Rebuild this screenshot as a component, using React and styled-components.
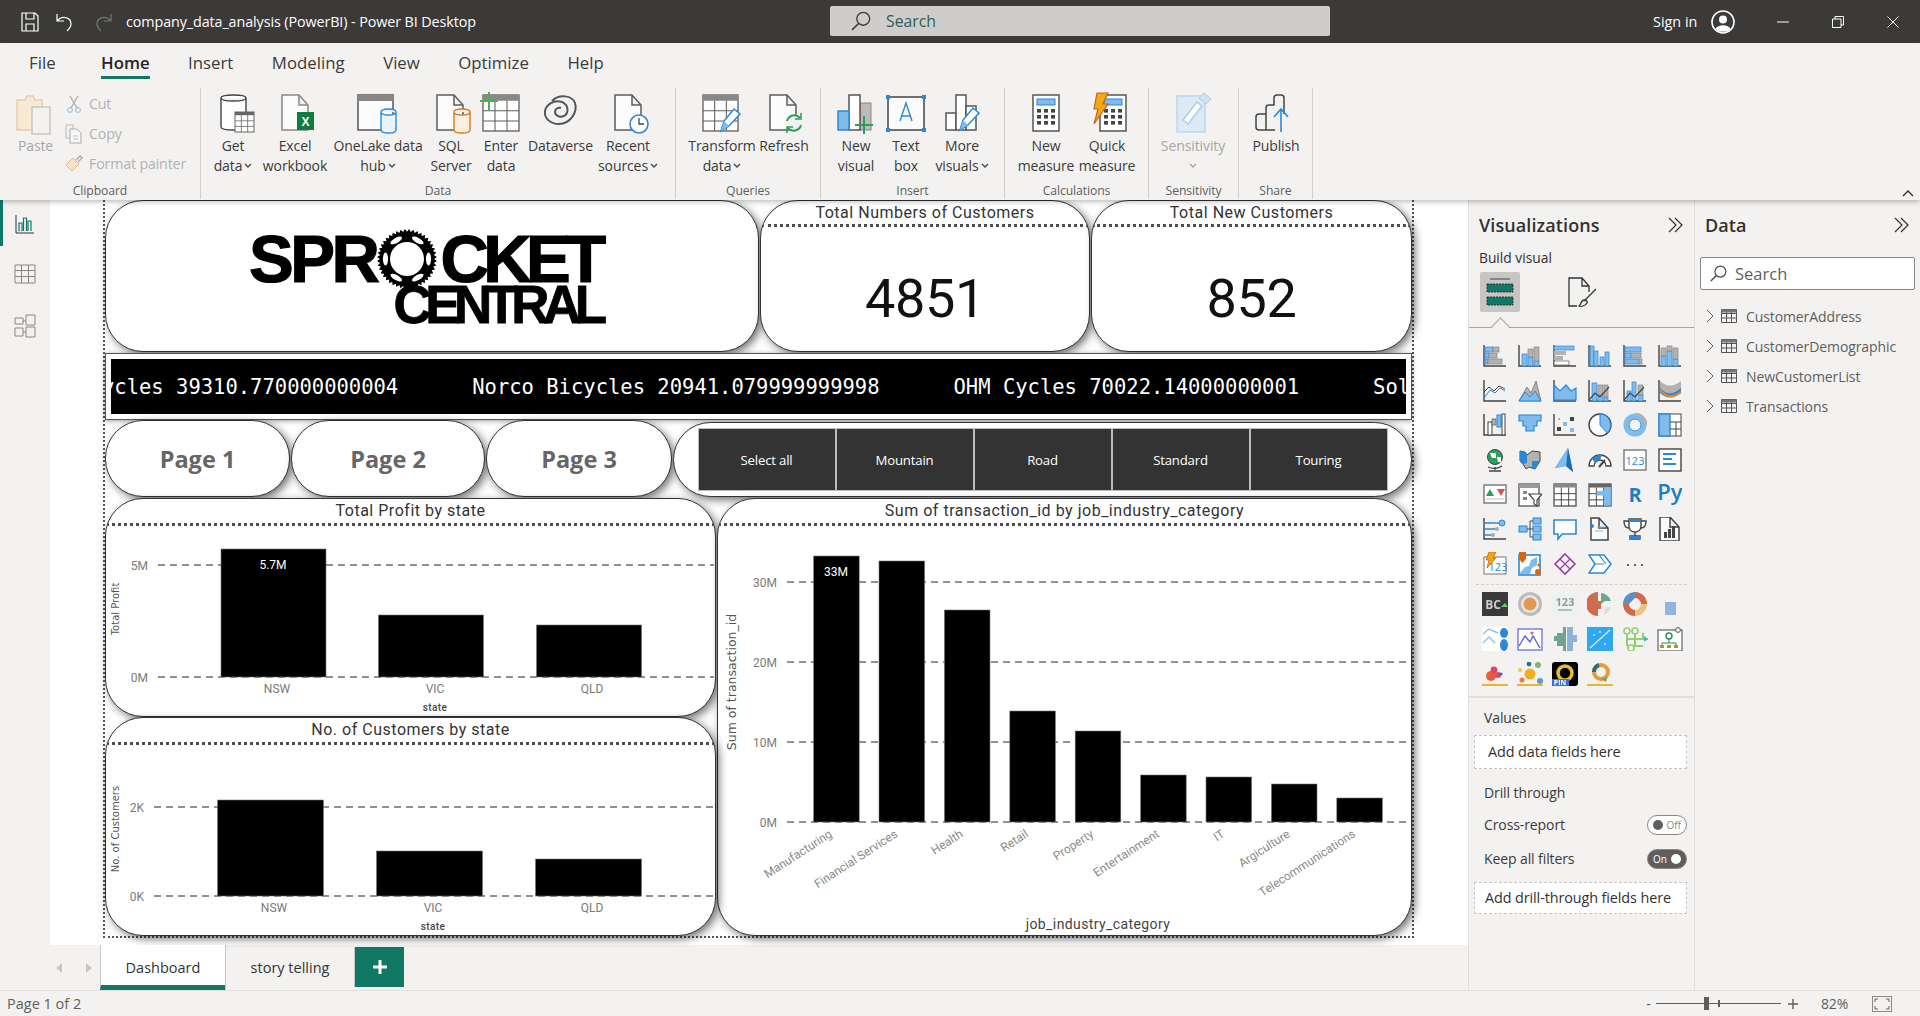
import React from 'react'
import styled, { createGlobalStyle } from 'styled-components'

const UI = '"Open Sans", "Noto Sans", sans-serif'
const DIN = 'Roboto, "Liberation Sans", sans-serif'
const GREEN = '#117865'
const DARK = '#444'
const BLUE = '#2b88d8'
const SKY = '#7fbbec'
const GRAY = '#b4b2b0'

const Global = createGlobalStyle`
  html, body { margin: 0; padding: 0; overflow: hidden; background: #f3f2f1; }
  #root { height: 1016px; }
  * { box-sizing: border-box; }
  svg { display: block; flex: none; }
`

const Shell = styled.div`
  width: 1920px;
  height: 1016px;
  display: grid;
  grid-template-rows: 43px 157px 790px 26px;
  font-family: ${UI};
  color: #252423;
`

/* title bar */
const TitleBar = styled.header`
  background: #3b3a39;
  color: #fff;
  display: flex;
  align-items: center;
  padding-left: 20px;
  position: relative;
`
const TitleIcons = styled.div`
  display: flex;
  gap: 16px;
  align-items: center;
  width: 106px;
`
const DocTitle = styled.div`
  font-size: 14.35px;
  width: 704px;
  letter-spacing: -0.1px;
  white-space: nowrap;
`
const TopSearch = styled.div`
  width: 500px;
  height: 30px;
  margin-top: -2px;
  background: #cfcdcb;
  border-radius: 2px;
  display: flex;
  align-items: center;
  gap: 15px;
  padding-left: 21px;
  color: #2f5d55;
  font-size: 15.8px;
`
const SignIn = styled.div`
  margin-left: 323px;
  font-size: 14.4px;
  width: 58px;
  white-space: nowrap;
`
const WindowButtons = styled.div`
  display: flex;
  align-items: center;
  margin-left: 20px;
`
const WindowButton = styled.div`
  width: 55px;
  display: flex;
  justify-content: center;
`

/* ribbon */
const Ribbon = styled.section`
  background: #f3f2f1;
  box-shadow: 0 2px 5px rgba(0, 0, 0, 0.25);
  position: relative;
  z-index: 2;
  display: flex;
  flex-direction: column;
`
const Menu = styled.nav`
  height: 38px;
  display: flex;
  align-items: center;
  padding-left: 29px;
  gap: 38.5px;
  font-size: 16.8px;
  color: #3b3a39;
`
const MenuItem = styled.div`
  position: relative;
  font-weight: ${(p) => (p.$active ? 600 : 400)};
  color: ${(p) => (p.$active ? '#252423' : '#3b3a39')};
  margin-left: ${(p) => (p.$active ? '7px' : '0')};
  ${(p) =>
    p.$active &&
    `&::after { content: ''; position: absolute; left: 0; right: 0; bottom: -5px; height: 3px; background: ${GREEN}; }`}
`
const Groups = styled.div`
  flex: 1;
  display: flex;
  padding-top: 7px;
  padding-bottom: 1px;
`
const Group = styled.div`
  width: ${(p) => p.$w}px;
  border-right: 1px solid #d2d0ce;
  display: flex;
  flex-direction: column;
  align-items: center;
`
const GroupItems = styled.div`
  flex: 1;
  width: 100%;
  display: flex;
  padding-top: 4px;
  padding-left: ${(p) => p.$pad || 0}px;
`
const GroupLabel = styled.div`
  font-size: 12.2px;
  line-height: 16px;
  color: #605e5c;
  letter-spacing: -0.1px;
`
const Item = styled.div`
  width: ${(p) => p.$w}px;
  display: flex;
  flex-direction: column;
  align-items: center;
  font-size: 14px;
  line-height: 20px;
  letter-spacing: -0.1px;
  text-align: center;
  color: ${(p) => (p.$off ? '#a8a6a4' : '#3b3a39')};
  white-space: nowrap;
`
const ItemIcon = styled.div`
  height: 44px;
`
const LabelLine = styled.div`
  display: flex;
  align-items: center;
  justify-content: center;
  gap: 2px;
  height: 20px;
`
const SmallColumn = styled.div`
  display: flex;
  flex-direction: column;
  gap: 7px;
  margin-left: 7px;
`
const SmallItem = styled.div`
  display: flex;
  align-items: center;
  gap: 6px;
  height: 23px;
  font-size: 14.3px;
  letter-spacing: -0.2px;
  color: #b3b1af;
  white-space: nowrap;
`
const Collapse = styled.div`
  position: absolute;
  right: 6px;
  bottom: 3px;
`

/* body */
const Body = styled.main`
  display: flex;
  min-height: 0;
`
const Rail = styled.aside`
  width: 50px;
  display: flex;
  flex-direction: column;
  align-items: center;
  gap: 30px;
  padding-top: 14px;
  position: relative;
  &::before {
    content: '';
    position: absolute;
    left: 0;
    top: 0;
    width: 3px;
    height: 46px;
    background: ${GREEN};
  }
`
const Center = styled.div`
  flex: 1;
  display: flex;
  flex-direction: column;
  min-width: 0;
`
const Canvas = styled.div`
  height: 745px;
  background: #fff;
  padding-left: 53px;
`
const Report = styled.div`
  width: 1311px;
  height: 738px;
  border: 2px dotted #555;
  border-top: 0;
  display: flex;
  flex-direction: column;
`
const Card = styled.div`
  background: #fff;
  border: 1px solid #333;
  border-radius: 38px;
  box-shadow: 3px 3px 8px rgba(0, 0, 0, 0.55);
`
const TopRow = styled.div`
  display: grid;
  grid-template-columns: 654px 330px 1fr;
  gap: 1px;
  height: 152px;
`
const LogoCard = styled(Card)`
  display: flex;
  justify-content: center;
  padding: 28px 18px 0 0;
`
const Logo = styled.div`
  display: flex;
  flex-direction: column;
  align-items: flex-end;
  width: 355px;
  color: #000;
  font-family: 'Liberation Sans', Arial, sans-serif;
  font-weight: 700;
`
const LogoTop = styled.div`
  display: flex;
  align-items: center;
  font-size: 67px;
  line-height: 60px;
  height: 60px;
  -webkit-text-stroke: 1.2px #000;
`
const LogoSpr = styled.span`
  letter-spacing: -3.4px;
`
const LogoCket = styled.span`
  letter-spacing: -5.6px;
  margin-left: 4px;
`
const LogoBottom = styled.div`
  font-size: 53px;
  line-height: 38px;
  letter-spacing: -6.6px;
  margin-top: -3px;
  margin-right: 0;
  -webkit-text-stroke: 0.8px #000;
`
const KpiCard = styled(Card)`
  display: flex;
  flex-direction: column;
  overflow: hidden;
`
const VisualTitle = styled.div`
  height: ${(p) => p.$h || 25}px;
  line-height: ${(p) => p.$h || 25}px;
  font-family: ${DIN};
  font-size: 16px;
  text-align: center;
  color: #333;
  letter-spacing: 0.52px;
  white-space: nowrap;
`
const DotRule = styled.div`
  border-top: 3px dotted #4d4d4d;
  height: 0;
  flex: none;
`
const KpiValue = styled.div`
  flex: 1;
  display: flex;
  align-items: center;
  justify-content: center;
  padding-top: 18px;
  font-family: ${DIN};
  font-size: 54px;
  letter-spacing: -0.3px;
  color: #111;
`
const Ticker = styled.div`
  height: 67px;
  margin-top: 1px;
  background: #fff;
  border: 1px solid #555;
  box-shadow: 0 1px 5px rgba(0, 0, 0, 0.4);
  padding: 5px;
`
const TickerBand = styled.div`
  height: 100%;
  background: #000;
  color: #fff;
  overflow: hidden;
  display: flex;
  align-items: center;
  gap: 74px;
  font-family: 'DejaVu Sans Mono', monospace;
  font-size: 20.5px;
  white-space: nowrap;
`
const TickerItem = styled.span`
  flex: none;
  &:first-child { margin-left: -9px; }
`
const NavRow = styled.div`
  height: 77px;
  display: grid;
  grid-template-columns: 185px 194px 186px 1fr;
  gap: 1px;
`
const PageButton = styled(Card)`
  display: flex;
  align-items: center;
  justify-content: center;
  font-weight: 700;
  font-size: 23.5px;
  color: #666;
`
const SlicerCard = styled(Card)`
  display: flex;
  align-items: center;
  padding-left: 24px;
  margin-top: 2px;
`
const SlicerButton = styled.div`
  width: 138px;
  height: 63px;
  background: #333;
  border-right: 1px solid #fff;
  outline: 1px solid #bbb;
  outline-offset: -1px;
  display: flex;
  align-items: center;
  justify-content: center;
  color: #fff;
  font-size: 13.2px;
  letter-spacing: -0.2px;
`
const BottomGrid = styled.div`
  flex: 1;
  display: grid;
  grid-template-columns: 611px 1fr;
  grid-template-rows: 219px 1fr;
  column-gap: 1px;
  margin-top: 1px;
  min-height: 0;
`
const ChartCard = styled(Card)`
  display: flex;
  flex-direction: column;
  overflow: hidden;
  min-height: 0;
  ${(p) => p.$tall && 'grid-column: 2; grid-row: 1 / span 2;'}
  & > svg { margin-top: 1px; }
`

/* tab strip */
const TabStrip = styled.div`
  flex: 1;
  display: flex;
  align-items: stretch;
  font-size: 14.5px;
`
const TabArrows = styled.div`
  display: flex;
  align-items: center;
  gap: 24px;
  width: 50px;
  padding-left: 6px;
`
const Tab = styled.div`
  width: ${(p) => p.$w}px;
  display: flex;
  align-items: center;
  justify-content: center;
  border-left: 1px solid #c8c6c4;
  color: #333;
  background: ${(p) => (p.$active ? '#fff' : 'transparent')};
  border-bottom: ${(p) => (p.$active ? `5px solid ${GREEN}` : '0')};
  padding-top: ${(p) => (p.$active ? '5px' : '0')};
`
const AddTab = styled.div`
  width: 49px;
  height: 40px;
  margin: 2px 0 0 1px;
  background: ${GREEN};
  color: #fff;
  display: flex;
  align-items: center;
  justify-content: center;
  box-shadow: -1px 0 0 #c8c6c4;
`

/* panes */
const Pane = styled.aside`
  width: ${(p) => p.$w}px;
  border-left: 1px solid #e1dfdd;
  padding-top: 11px;
  display: flex;
  flex-direction: column;
`
const PaneHead = styled.div`
  display: flex;
  align-items: center;
  justify-content: space-between;
  height: 28px;
  padding: 0 10px 0 ${(p) => p.$pad}px;
  font-size: 18px;
  font-weight: 600;
  letter-spacing: 0.1px;
  color: #323130;
`
const BuildLabel = styled.div`
  margin: 10px 0 0 10px;
  height: 18px;
  font-size: 13.8px;
  line-height: 18px;
  font-weight: 500;
  color: #323130;
`
const BuildTabs = styled.div`
  display: flex;
  height: 56px;
  margin-top: 5px;
  padding-left: 11px;
  border-bottom: 1px solid #a8a6a4;
  position: relative;
  &::after {
    content: '';
    position: absolute;
    left: 25px;
    bottom: -6px;
    width: 12px;
    height: 12px;
    transform: rotate(45deg);
    background: #f3f2f1;
    border-left: 1px solid #a8a6a4;
    border-top: 1px solid #a8a6a4;
  }
`
const BuildTab = styled.div`
  width: 40px;
  height: 40px;
  border-radius: 2px;
  background: ${(p) => (p.$active ? '#c8c6c4' : 'transparent')};
  display: flex;
  align-items: center;
  justify-content: center;
  margin-right: ${(p) => p.$gap || 0}px;
`
const VizGrid = styled.div`
  display: grid;
  grid-template-columns: repeat(6, 35px);
  grid-auto-rows: 34.6px;
  padding: ${(p) => p.$top}px 0 0 8px;
  justify-items: center;
  align-items: center;
`
const Divider = styled.div`
  margin: 3px 7px 2px;
  border-top: 1px dashed #d2d0ce;
`
const PaneRule = styled.div`
  margin-top: 5px;
  border-top: 2px solid #e1dfdd;
`
const FieldLabel = styled.div`
  margin: ${(p) => p.$top || 0}px 0 0 15px;
  font-size: 14px;
  letter-spacing: -0.1px;
  font-weight: ${(p) => (p.$bold ? 500 : 400)};
  color: #3b3a39;
  height: 18px;
  line-height: 18px;
`
const DropBox = styled.div`
  margin: ${(p) => p.$top}px 0 0 5px;
  width: 213px;
  height: ${(p) => p.$h}px;
  background: #fff;
  border: 1px dashed #c8c6c4;
  display: flex;
  align-items: center;
  padding-left: ${(p) => p.$pad}px;
  font-size: 14.4px;
  letter-spacing: -0.1px;
  color: #323130;
  white-space: nowrap;
`
const ToggleRow = styled.div`
  margin: ${(p) => p.$top}px 0 0 15px;
  width: 203px;
  height: 20px;
  display: flex;
  align-items: center;
  justify-content: space-between;
  font-size: 14px;
  letter-spacing: -0.1px;
  color: #3b3a39;
`
const Toggle = styled.div`
  width: 40px;
  height: 20px;
  border-radius: 10px;
  border: 1px solid #8a8886;
  background: ${(p) => (p.$on ? '#605e5c' : '#fff')};
  color: ${(p) => (p.$on ? '#fff' : '#8a8886')};
  display: flex;
  flex-direction: ${(p) => (p.$on ? 'row-reverse' : 'row')};
  align-items: center;
  justify-content: space-between;
  padding: 0 5px;
  font-size: 10px;
  letter-spacing: 0;
  &::before {
    content: '';
    width: 10px;
    height: 10px;
    border-radius: 50%;
    background: ${(p) => (p.$on ? '#fff' : '#605e5c')};
  }
`
const DataSearch = styled.div`
  margin: 18px 0 0 5px;
  width: 215px;
  height: 33px;
  background: #fff;
  border: 1px solid #8a8886;
  border-radius: 2px;
  display: flex;
  align-items: center;
  gap: 8px;
  padding-left: 9px;
  font-size: 16.5px;
  color: #605e5c;
`
const TableList = styled.div`
  margin-top: 11px;
  display: flex;
  flex-direction: column;
`
const TableRow = styled.div`
  height: 30px;
  display: flex;
  align-items: center;
  padding-left: 11px;
  gap: 7px;
  font-size: 14px;
  letter-spacing: -0.1px;
  color: #605e5c;
  & > span { margin-left: 2px; }
`

/* status bar */
const StatusBar = styled.footer`
  border-top: 1px solid #e1dfdd;
  display: flex;
  align-items: center;
  padding-left: 7px;
  font-size: 14.5px;
  color: #605e5c;
`
const ZoomBox = styled.div`
  margin-left: auto;
  display: flex;
  align-items: center;
  color: #605e5c;
`
const ZoomTrack = styled.div`
  width: 125px;
  height: 1px;
  background: #605e5c;
  margin: 0 7px 0 5px;
  position: relative;
`
const ZoomThumb = styled.div`
  position: absolute;
  left: ${(p) => p.$x}px;
  top: ${(p) => -p.$h / 2}px;
  width: ${(p) => p.$w}px;
  height: ${(p) => p.$h}px;
  background: #605e5c;
`
const ZoomPercent = styled.div`
  margin: 0 24px 0 23px;
  font-size: 14px;
  letter-spacing: -0.2px;
`
const FitButton = styled.div`
  margin-right: 28px;
`

/* svg helpers */
const S = ({ w = 24, h = 24, vb, children }) => (
  <svg width={w} height={h} viewBox={vb || `0 0 ${w} ${h}`} fill="none">
    {children}
  </svg>
)
const Doc = ({ x = 10, y = 4, w = 24, h = 36, c = '#555', f = '#fbfbfb' }) => (
  <path d={`M${x} ${y}h${w - 9}l9 10v${h - 10}h-${w}zM${x + w - 9} ${y}v10h9`} stroke={c} strokeWidth="1.5" fill={f} />
)
const TableGrid = ({ x, y, w, h, rows = 3, cols = 3, head = '#8a8886', c = '#605e5c', f = '#fff', sw = 1 }) => {
  const top = h * 0.16
  const lines = []
  for (let i = 1; i < cols; i++) lines.push(`M${x + (w / cols) * i} ${y + top}V${y + h}`)
  for (let i = 1; i < rows; i++) lines.push(`M${x} ${y + top + ((h - top) / rows) * i}H${x + w}`)
  return (
    <g>
      <rect x={x} y={y} width={w} height={h} fill={f} stroke={c} strokeWidth={sw} />
      <rect x={x} y={y} width={w} height={top} fill={head} />
      <path d={lines.join('')} stroke={c} strokeWidth={sw * 0.8} />
    </g>
  )
}
const Cyl = ({ x, y, w, h, c, f = '#fff' }) => (
  <path
    d={`M${x} ${y + 3}c0-4 ${w}-4 ${w} 0v${h - 6}c0 4-${w} 4-${w} 0zM${x} ${y + 3}c0 4 ${w} 4 ${w} 0`}
    stroke={c}
    strokeWidth="1.4"
    fill={f}
  />
)
const Pen = ({ x = 0, y = 0 }) => (
  <g transform={`translate(${x} ${y})`}>
    <path d="M1 22l3-10 10-12 6 5-11 12z" fill="#fff" stroke={BLUE} strokeWidth="1.5" />
    <path d="M1 22l3-10 5 5z" fill={SKY} />
  </g>
)
const Calc = ({ x, y }) => (
  <g>
    <rect x={x} y={y} width="26" height="36" fill="#fff" stroke="#555" strokeWidth="1.5" />
    <rect x={x + 4} y={y + 4} width="18" height="6" fill={SKY} stroke={BLUE} />
    {[14, 20, 26].map((r) =>
      [4, 11, 18].map((c) => <rect key={`${r}${c}`} x={x + c} y={y + r} width="4" height="3.6" fill="#444" />),
    )}
  </g>
)
const Chevron = ({ c = '#444' }) => (
  <svg width="8" height="6" viewBox="0 0 8 6" fill="none">
    <path d="M1 1l3 3 3-3" stroke={c} strokeWidth="1.3" />
  </svg>
)
const Gear = () => {
  const pts = []
  const teeth = 44
  for (let i = 0; i < teeth * 2; i++) {
    const r = i % 2 ? 30 : 27.2
    const a = (i / (teeth * 2)) * Math.PI * 2
    pts.push(`${(30 + r * Math.cos(a)).toFixed(1)},${(30 + r * Math.sin(a)).toFixed(1)}`)
  }
  return (
    <svg width="60" height="60" viewBox="0 0 60 60">
      <polygon points={pts.join(' ')} fill="#000" />
      {[0, 60, 120, 180, 240, 300].map((d) => (
        <ellipse key={d} cx="30" cy="8.500" rx="6.500" ry="2.600" fill="#fff" transform={`rotate(${d + 30} 30 30)`} />
      ))}
      <circle cx="30" cy="30" r="17" fill="#fff" />
    </svg>
  )
}

/* ribbon icons, drawn on a 44 box */
const RI = {
  paste: (
    <S w={44} h={44}>
      <path d="M3 8h8l2-4h6l2 4h7v30H3z" fill="#f7e9d4" stroke="#e8cfa8" strokeWidth="1.5" />
      <rect x="18" y="15" width="18" height="27" fill="#f3f2f1" stroke="#c8c6c4" strokeWidth="1.5" />
    </S>
  ),
  data: (
    <S w={44} h={44}>
      <Cyl x={10} y={3} w={25} h={35} c="#444" />
      <TableGrid x={24} y={20} w={19} h={20} head="#666" c="#666" />
    </S>
  ),
  excel: (
    <S w={44} h={44}>
      <Doc x={9} y={3} w={26} h={35} c="#8a8886" />
      <rect x="24" y="20" width="17" height="18" fill="#107c41" />
      <text x="32.5" y="34" textAnchor="middle" fontSize="12" fontWeight="700" fill="#fff" fontFamily="Liberation Sans">X</text>
    </S>
  ),
  lake: (
    <S w={44} h={44}>
      <rect x="2" y="3" width="35" height="35" fill="#fbfbfb" stroke="#555" strokeWidth="1.5" />
      <rect x="2" y="3" width="35" height="6" fill="#8a8886" />
      <Cyl x={25} y={17} w={15} h={24} c={BLUE} f="#eaf4fc" />
    </S>
  ),
  sql: (
    <S w={44} h={44}>
      <Doc x={8} y={3} w={26} h={35} c="#605e5c" />
      <Cyl x={25} y={17} w={16} h={24} c="#d87a1d" f="#fdf0e2" />
    </S>
  ),
  enter: (
    <S w={44} h={44}>
      <TableGrid x={4} y={3} w={36} h={36} head="#8a8886" c="#605e5c" sw={1.3} />
      <path d="M10 0v18M1 9h18" stroke="#4caf50" strokeWidth="2" />
    </S>
  ),
  dataverse: (
    <S w={44} h={44}>
      <path d="M13 9c7-7 20-6 23 2 3 9-5 21-16 21-9 0-15-6-14-13 1-6 9-12 17-9 7 3 7 11 2 14-5 2-9-1-9-4 0-3 3-5 6-4" stroke="#555" strokeWidth="2" />
    </S>
  ),
  recent: (
    <S w={44} h={44}>
      <Doc x={9} y={3} w={26} h={35} c="#605e5c" />
      <circle cx="33" cy="32" r="9" fill="#fff" stroke={BLUE} strokeWidth="1.6" />
      <path d="M33 26v6h5" stroke="#444" strokeWidth="1.3" />
    </S>
  ),
  transform: (
    <S w={44} h={44}>
      <TableGrid x={3} y={3} w={35} h={36} c="#605e5c" sw={1.3} />
      <Pen x={20} y={17} />
    </S>
  ),
  refresh: (
    <S w={44} h={44}>
      <Doc x={8} y={3} w={26} h={35} c="#605e5c" />
      <circle cx="32" cy="31" r="8" fill="#f3f2f1" />
      <path d="M25 29a7.5 7.5 0 0 1 13-3M39 33a7.5 7.5 0 0 1-13 3" stroke="#2e9e5b" strokeWidth="2" />
      <path d="M39 21v6h-6M25 41v-6h6" stroke="#2e9e5b" strokeWidth="1.6" />
    </S>
  ),
  newVisual: (
    <S w={44} h={44}>
      <rect x="26" y="11" width="11" height="27" fill="#bdbbb9" stroke="#8a8886" />
      <rect x="15" y="3" width="11" height="35" fill="#fff" stroke="#555" strokeWidth="1.5" />
      <rect x="4" y="19" width="11" height="19" fill={SKY} stroke={BLUE} strokeWidth="1.5" />
      <path d="M30 24v18M21 33h18" stroke="#2e9e5b" strokeWidth="2" />
    </S>
  ),
  textBox: (
    <S w={44} h={44}>
      <rect x="4" y="5" width="36" height="33" fill="#fbfbfb" stroke="#444" strokeWidth="1.5" />
      <path d="M16 29l6-18 6 18M18 24h8" stroke={BLUE} strokeWidth="1.4" />
      {[[2, 3], [38, 3], [2, 36], [38, 36]].map(([x, y]) => <rect key={`${x}${y}`} x={x} y={y} width="4" height="4" fill={BLUE} />)}
    </S>
  ),
  moreVisuals: (
    <S w={44} h={44}>
      <rect x="6" y="21" width="10" height="17" fill="#fff" stroke="#555" strokeWidth="1.5" />
      <rect x="16" y="3" width="10" height="35" fill="#fff" stroke="#555" strokeWidth="1.5" />
      <rect x="26" y="14" width="10" height="24" fill="#fff" stroke="#555" strokeWidth="1.5" />
      <Pen x={19} y={16} />
    </S>
  ),
  measure: (
    <S w={44} h={44}>
      <Calc x={9} y={3} />
    </S>
  ),
  quick: (
    <S w={44} h={44}>
      <Calc x={15} y={3} />
      <path d="M12 1h11l-5 11h5L9 32l4-15H9z" fill="#f3a712" stroke="#c8641e" strokeWidth="1.2" />
    </S>
  ),
  sensitivity: (
    <S w={44} h={44}>
      <path d="M6 4h28v36H6z" fill="#dceaf5" stroke="#b9d7ee" strokeWidth="1.5" />
      <path d="M12 28l14-18 5 4-14 18z" fill="#fff" stroke="#a9cde9" strokeWidth="1.5" />
      <path d="M28 6l5-5 7 6-5 5z" fill="#cfe3f3" stroke="#a9cde9" />
    </S>
  ),
  publish: (
    <S w={44} h={44}>
      <path d="M5 38c-2 0-3-1-3-3V25c0-2 1-3 3-3h7v16zM12 22V16c0-2 1-3 3-3h5V6c0-2 1-3 3-3h4c2 0 3 1 3 3v16M12 38h9" stroke="#444" strokeWidth="1.5" strokeLinejoin="round" />
      <path d="M27 40V18M20 25l7-8 7 8" stroke={BLUE} strokeWidth="1.6" />
    </S>
  ),
}

/* visualization gallery */
const Ax = () => <path d="M1 1v21h22" stroke={DARK} strokeWidth="1.4" />
const Hb = ({ y, a, b, h = 5 }) => (
  <g>
    <rect x="2" y={y} width={a} height={h} fill={SKY} stroke={BLUE} strokeWidth=".7" />
    {b ? <rect x={2 + a} y={y} width={b} height={h} fill={GRAY} stroke="#8a8886" strokeWidth=".7" /> : null}
  </g>
)
const Vb = ({ x, a, b, w = 5 }) => (
  <g>
    <rect x={x} y={22 - a} width={w} height={a} fill={SKY} stroke={BLUE} strokeWidth=".7" />
    {b ? <rect x={x} y={22 - a - b} width={w} height={b} fill={GRAY} stroke="#8a8886" strokeWidth=".7" /> : null}
  </g>
)
const ComboLine = () => <path d="M1 21l6-7 5 4 9-10" stroke={DARK} strokeWidth="1.2" />
const T = ({ x = 12, y = 17, s = 12, c = SKY, w = 400, children }) => (
  <text x={x} y={y} fontSize={s} fontWeight={w} textAnchor="middle" fill={c} fontFamily="Open Sans">
    {children}
  </text>
)
const builtIn = [
  <><Ax /><Hb y={3} a={8} b={6} /><Hb y={9} a={4} b={8} /><Hb y={15} a={3} b={14} /></>,
  <><Ax /><Vb x={4} a={12} /><Vb x={10} a={9} b={8} /><Vb x={16} a={5} b={14} /></>,
  <><Ax /><rect x="1" y="2" width="20" height="4" fill={SKY} stroke={BLUE} strokeWidth=".7" /><rect x="1" y="7" width="12" height="4" fill={GRAY} /><rect x="1" y="12" width="9" height="4" fill={GRAY} /><rect x="1" y="17" width="15" height="4" fill="#fff" stroke={DARK} strokeWidth=".6" /></>,
  <><Ax /><Vb x={2} a={20} w={4} /><Vb x={6} a={15} w={4} /><Vb x={12} a={9} w={4} /><Vb x={17} a={14} w={4} /></>,
  <><Ax /><Hb y={3} a={16} /><Hb y={9} a={6} b={10} /><Hb y={15} a={14} b={3} /></>,
  <><Ax /><Vb x={3} a={10} b={8} /><Vb x={9} a={15} b={5} /><Vb x={15} a={7} b={11} /></>,
  <><Ax /><path d="M1 13l5-5 5 4 5-5 6 3" stroke={DARK} /><path d="M1 19l6-8 5 3 5-5 5 3" stroke={BLUE} /></>,
  <><path d="M1 22l8-14 4 6 5-12 5 20z" fill={GRAY} stroke="#8a8886" /><path d="M1 22l6-9 5 5 5-6 6 10z" fill={SKY} stroke={BLUE} /></>,
  <><Ax /><path d="M1 6l6 6 6-6 5 6 5-3v12H1z" fill={SKY} stroke={BLUE} strokeWidth="1.2" /></>,
  <><Ax /><Vb x={4} a={18} w={5} /><Vb x={10} a={6} b={10} w={5} /><Vb x={16} a={4} b={12} w={4} /><ComboLine /></>,
  <><Ax /><Vb x={4} a={10} w={4} /><Vb x={9} a={19} w={4} /><Vb x={15} a={6} b={10} w={5} /><ComboLine /></>,
  <><Ax /><path d="M2 2c7 6 13 6 21 0v9c-8 6-14 6-21 0z" fill={GRAY} /><path d="M2 9c7 7 13 7 21 0v5c-8 6-14 6-21 0z" fill={BLUE} /><path d="M2 11c7 8 13 8 21 2" stroke="#e8891c" strokeWidth="2" /></>,
  <><Ax /><rect x="5" y="9" width="4" height="13" fill="#fff" stroke={DARK} /><rect x="9" y="6" width="4" height="6" fill={GRAY} stroke={DARK} strokeWidth=".6" /><rect x="14" y="2" width="4" height="12" fill={SKY} stroke={BLUE} /><rect x="19" y="1" width="3" height="21" fill="#fff" stroke={DARK} /></>,
  <><path d="M1 2h22v6h-4v5h-3v5H8v-5H5V8H1z" fill={SKY} stroke={BLUE} strokeWidth="1.2" /></>,
  <><Ax /><rect x="4" y="14" width="4" height="4" fill={DARK} /><rect x="17" y="4" width="4" height="4" fill={DARK} /><rect x="10" y="9" width="4" height="4" fill={SKY} /><rect x="17" y="15" width="4" height="4" fill={SKY} /><rect x="5" y="5" width="2" height="2" fill={SKY} /></>,
  <><circle cx="12" cy="12" r="11" fill="#fff" stroke={DARK} strokeWidth="1.4" /><path d="M12 1a11 11 0 0 1 7 19l-7-8z" fill={SKY} stroke={BLUE} /></>,
  <><circle cx="12" cy="12" r="9" stroke={SKY} strokeWidth="5" /><path d="M12 1a11 11 0 0 1 11 11" stroke={GRAY} strokeWidth="3" /><circle cx="12" cy="12" r="6" stroke={BLUE} /></>,
  <><rect x="1" y="1" width="22" height="22" fill="#fff" stroke={DARK} /><rect x="1" y="1" width="11" height="22" fill={SKY} stroke={BLUE} strokeWidth="1.4" /><path d="M12 9h11M12 16h11M18 9v14" stroke={DARK} /></>,
  <><circle cx="12" cy="9" r="7.5" fill="#2e9e5b" stroke={DARK} /><path d="M7 5h6v5H9zM14 9h4v5h-3z" fill="#fff" /><path d="M5 19c4 2 10 2 14-1M12 19v3M6 23h12" stroke={DARK} strokeWidth="1.3" /></>,
  <><path d="M2 3l5 1 2 3 5-4 8 1v9l-5 8-6-2-3 2-3-5-3-3z" fill={GRAY} stroke={DARK} /><path d="M2 3l5 1 2 3v8l-3 1-4-3z" fill={BLUE} /><path d="M14 13h8l-5 8-3-1z" fill={BLUE} /></>,
  <><path d="M15 0l5 24-7-6-11 2z" fill={BLUE} /><path d="M15 0l-2 18 7 6z" fill="#1a6fb5" /><path d="M15 0L2 20l11-2z" fill={SKY} /></>,
  <><path d="M1 18a11 11 0 0 1 22 0h-5a6 6 0 0 0-12 0z" fill="#fff" stroke={DARK} strokeWidth="1.3" /><path d="M4 11a11 11 0 0 1 10-4l-2 5a6 6 0 0 0-5 3z" fill={BLUE} /><path d="M11 19l6-7" stroke={DARK} strokeWidth="2" /></>,
  <><rect x="1" y="2" width="22" height="20" fill="#fff" stroke="#777" strokeWidth="1.4" /><T y={16.5} s={11} c={BLUE}>123</T></>,
  <><rect x="1" y="1" width="22" height="22" fill="#fff" stroke={DARK} strokeWidth="1.4" /><path d="M5 6h13M5 11h9M5 16h13" stroke={BLUE} strokeWidth="2" /></>,
  <><rect x="1" y="2" width="22" height="18" fill="#fff" stroke="#777" strokeWidth="1.4" /><path d="M7 6l-4 7h8z" fill="#2e9e5b" /><path d="M14 6h8l-4 7z" fill="#e0504a" /><path d="M3 16h18" stroke="#bbb" /></>,
  <><rect x="1" y="1" width="20" height="22" fill="#fff" stroke={DARK} strokeWidth="1.2" /><rect x="1" y="1" width="20" height="4" fill="#999" /><rect x="5" y="8" width="4" height="3" fill="#888" /><rect x="5" y="14" width="4" height="3" fill="#888" /><path d="M11 11h13l-5 6v6l-3-2v-4z" fill="#fff" stroke={DARK} strokeWidth="1.2" /></>,
  <><TableGrid x={1} y={1} w={22} h={22} head="#8a8886" c={DARK} sw={1.2} /></>,
  <><TableGrid x={1} y={1} w={22} h={22} head="#666" c={DARK} sw={1.2} /><rect x="8.5" y="8" width="14" height="4.5" fill={SKY} /><rect x="15.8" y="4.5" width="7" height="18" fill={SKY} /></>,
  <T y={19} s={20} c="#1d7cc4" w={700}>R</T>,
  <T y={17} s={22} c="#1d7cc4" w={600}>Py</T>,
  <><Ax /><path d="M1 6h17M1 12h12M1 18h8" stroke={BLUE} strokeWidth="1.3" /><circle cx="19" cy="6" r="3" fill={SKY} stroke={BLUE} /><circle cx="14" cy="12" r="2" fill="#aaa" /><circle cx="10" cy="18" r="2" fill="#aaa" /></>,
  <><rect x="1" y="9" width="8" height="6" fill={SKY} stroke={BLUE} /><rect x="15" y="1" width="8" height="6" fill={SKY} stroke={BLUE} /><rect x="15" y="9" width="8" height="6" fill={SKY} stroke={BLUE} /><rect x="15" y="17" width="8" height="6" fill={SKY} stroke={BLUE} /><path d="M9 12h6M12 4v16M12 4h3M12 20h3" stroke={DARK} /></>,
  <><path d="M1 3h22v14H9l-4 5v-5H1z" fill="#fff" stroke={BLUE} strokeWidth="1.6" /></>,
  <><Doc x={3} y={1} w={17} h={22} c={DARK} /><circle cx="4" cy="9" r="2" fill={BLUE} /><path d="M9 10h8M7 14h8" stroke={SKY} /></>,
  <><path d="M6 2h12v7c0 8-12 8-12 0zM6 4H1c0 5 2 7 5 7M18 4h5c0 5-2 7-5 7M12 15v4M7 22h10v-3H7z" stroke={DARK} strokeWidth="1.4" fill="#fff" /><rect x="6" y="2" width="12" height="3" fill={BLUE} /><rect x="7" y="19" width="10" height="3" fill={BLUE} /></>,
  <><Doc x={2} y={0} w={19} h={24} c={DARK} /><rect x="6" y="15" width="3" height="6" fill={DARK} /><rect x="10" y="12" width="3" height="9" fill={DARK} /><rect x="14" y="9" width="3" height="12" fill={DARK} /></>,
  <><rect x="1" y="5" width="22" height="17" fill="#fff" stroke="#777" /><T x={15} y={19} s={11} c={BLUE}>123</T><path d="M6 0h7l-3 6h3L4 16l2-8H3z" fill="#f3a712" stroke="#c8641e" strokeWidth=".8" /></>,
  <><rect x="1" y="3" width="21" height="20" fill="#fff" stroke={BLUE} strokeWidth="1.6" /><path d="M1 22l6-7 4-1 2-6 6-3v8l-5 3-2 6z" fill={SKY} /><path d="M1 0h7v7l-3.5 4L1 7z" fill="#d8650f" /><circle cx="20" cy="20" r="3" fill="#d8650f" /><circle cx="21" cy="13" r="1.6" fill="#d8650f" /></>,
  <><path d="M12 2l10 10-10 10L2 12z" stroke="#9a3ea8" strokeWidth="1.6" /><path d="M7 7l10 10M17 7L7 17" stroke="#9a3ea8" strokeWidth="1.2" /></>,
  <><path d="M1 3h15l7 9-7 9H1l6-9z" fill="#fff" stroke={BLUE} strokeWidth="1.5" /><path d="M7 12h9M11 3l7 9" stroke={BLUE} strokeWidth="1.2" /></>,
  <><circle cx="5" cy="13" r="1.1" fill={DARK} /><circle cx="12" cy="13" r="1.1" fill={DARK} /><circle cx="19" cy="13" r="1.1" fill={DARK} /></>,
]
const Blur = styled.g`
  filter: blur(0.5px);
`
const custom = [
  <><rect width="26" height="24" fill="#3a3a3a" /><T x={11} y={17} s={12} c="#ccc" w={700}>BC</T><path d="M19 15l4-4 3 4z" fill="#5fd35f" /></>,
  <><circle cx="13" cy="12" r="12" fill="#bbb" /><circle cx="13" cy="12" r="9" fill="#e8e6e4" /><circle cx="13" cy="12" r="6.5" fill="#e09a58" /></>,
  <><rect width="26" height="22" y="1" fill="#e9f4f1" /><T x={13} y={14} s={11} c="#999" w={700}>123</T><path d="M6 18h14" stroke="#bbb" strokeWidth="2" /></>,
  <><path d="M11 0a12 12 0 0 0 0 24v-7h3v-8h-3z" fill="#cf6b4e" /><path d="M14 1a12 12 0 0 1 10 8h-6l-4 3z" fill="#6aa98e" /><path d="M19 15h5a12 12 0 0 1-8 8z" fill="#ddd" /></>,
  <><path d="M13 0a12 12 0 0 1 12 12h-6a6 6 0 0 0-6-6z" fill="#d1684b" /><path d="M25 12a12 12 0 0 1-12 12v-6a6 6 0 0 0 6-6z" fill="#edc083" /><path d="M13 24A12 12 0 0 1 1 12h6a6 6 0 0 0 6 6z" fill="#d1684b" /><path d="M1 12A12 12 0 0 1 13 0v6l-6 6z" fill="#5c8fc3" /></>,
  <><rect x="8" y="4" width="11" height="6" fill="#f2f2f2" /><rect x="8" y="10" width="11" height="13" fill="#93b5dc" /></>,
  <><rect width="26" height="24" fill="#fff" /><path d="M1 16l6-6 6 6M1 7l6-5 9 4" stroke="#8dc0ee" strokeWidth="1.4" /><ellipse cx="22" cy="6" rx="4" ry="5" fill="#2b88d8" /><ellipse cx="22" cy="18" rx="4" ry="6" fill="#2b88d8" /></>,
  <><rect x="1" y="2" width="24" height="21" fill="#fff" stroke="#5c63d8" strokeWidth="1.2" /><path d="M2 19l6-10 5 6 3-6 7 12" stroke="#5c63d8" strokeWidth="1.4" /><circle cx="15" cy="6" r="1.6" fill="#e64fc6" /></>,
  <><path d="M5 6h6V0h3v24h-3v-5H5v-5H2V9h3z" fill="#6fa395" /><path d="M15 0h6v8h4v7h-4v9h-6z" fill="#8fb3d6" /></>,
  <><rect width="26" height="24" fill="#2fa8f0" /><path d="M3 21L23 3" stroke="#cdeaff" strokeWidth="1.5" /><circle cx="7" cy="8" r="1" fill="#cdeaff" /><circle cx="18" cy="17" r="1" fill="#cdeaff" /><circle cx="13" cy="5" r="1" fill="#cdeaff" /></>,
  <><path d="M5 5v14M13 6v12M21 6v6M5 12h21M5 19h16" stroke="#8fd070" strokeWidth="2" /><circle cx="5" cy="4" r="3" fill="#fff" stroke="#8fd070" strokeWidth="1.6" /><circle cx="13" cy="4" r="3" fill="#fff" stroke="#8fd070" strokeWidth="1.6" /><circle cx="9" cy="21" r="3" fill="#fff" stroke="#8fd070" strokeWidth="1.6" /><path d="M22 9l4 3-4 3z" fill="#3ac0a5" /></>,
  <><rect x="1" y="3" width="24" height="21" fill="#fff" stroke="#777" strokeWidth="1.4" /><circle cx="12" cy="9" r="3" stroke="#2e8b57" strokeWidth="1.4" /><path d="M12 12v4M5 19v-3h14v3" stroke="#2e8b57" /><rect x="3" y="18" width="4" height="3" fill="#b4902e" /><rect x="10" y="18" width="4" height="3" fill="#b4902e" /><rect x="17" y="18" width="4" height="3" fill="#b4902e" /><circle cx="21" cy="3" r="2.4" fill="#f3f2f1" stroke="#555" /></>,
  <><circle cx="9" cy="14" r="5" fill="#ea5b3a" /><circle cx="12" cy="8" r="3.4" fill="#d9486a" /><circle cx="16" cy="13" r="3" fill="#d9486a" /><circle cx="19" cy="12" r="1.6" fill="#4060b0" /><path d="M0 23h26" stroke="#e8b53a" strokeWidth="2" /></>,
  <><circle cx="13" cy="12" r="5.5" fill="#f2b021" /><circle cx="3" cy="8" r="2" fill="#f2c94c" /><circle cx="12" cy="2" r="2.4" fill="#2f6f8f" /><circle cx="21" cy="3" r="3" fill="#79b67c" /><circle cx="23" cy="19" r="3" fill="#5a9bd5" /><circle cx="5" cy="18" r="2.5" fill="#e87d3e" /><path d="M0 23h26" stroke="#e8b53a" strokeWidth="2" /></>,
  <><rect width="26" height="24" rx="3" fill="#000" /><circle cx="13" cy="11" r="7" stroke="#e8c021" strokeWidth="3.5" /><rect y="17" width="17" height="7" fill="#3a6fd8" /><T x={8} y={23.4} s={7} c="#fff" w={700}>PIN</T></>,
  <><circle cx="14" cy="10" r="7" stroke="#e89a3a" strokeWidth="4" /><path d="M7 10a7 7 0 0 1 5-7" stroke="#2f6f6f" strokeWidth="4" /><path d="M14 17l6-2-1 5z" fill="#6aa84f" /><path d="M0 23h26" stroke="#e8b53a" strokeWidth="2" /></>,
]

/* charts */
const axisText = { fontFamily: 'Roboto, sans-serif', fill: '#7a7a7a' }
const BarChart = ({ w, h, grid, ticks, tickX, bars, labels, xTitle, yTitle, value, rotate }) => (
  <svg width={w} height={h} viewBox={`0 0 ${w} ${h}`}>
    {ticks.map((t) => (
      <g key={t.label}>
        <line x1={grid[0]} x2={grid[1]} y1={t.y} y2={t.y} stroke="#222" strokeWidth="1" strokeDasharray="7 5" />
        <text x={tickX} y={t.y + 4.5} textAnchor="end" fontSize="12" {...axisText}>{t.label}</text>
      </g>
    ))}
    {bars.map((b) => (
      <rect key={b.x} x={b.x} y={b.top} width={b.w} height={ticks[ticks.length - 1].y - b.top} fill="#000" stroke="#777" strokeWidth=".6" />
    ))}
    {labels.map((l) =>
      rotate ? (
        <text key={l.t} transform={`translate(${l.x} ${l.y}) rotate(${rotate})`} textAnchor="end" fontSize="12" {...axisText} fill="#8a8a8a">{l.t}</text>
      ) : (
        <text key={l.t} x={l.x} y={l.y} textAnchor="middle" fontSize="12" {...axisText}>{l.t}</text>
      ),
    )}
    {value && (
      <text x={value.x} y={value.y} textAnchor="middle" fontSize="12" fontFamily="Roboto, sans-serif" fill="#fff">{value.t}</text>
    )}
    <text x={xTitle.x} y={xTitle.y} textAnchor="middle" fontSize={xTitle.s} fontWeight={xTitle.b ? 500 : 400} fontFamily="Roboto, sans-serif" letterSpacing=".4" fill="#444">{xTitle.t}</text>
    <text transform={`translate(${yTitle.x} ${yTitle.y}) rotate(-90)`} textAnchor="middle" fontSize={yTitle.s} fontFamily="DejaVu Sans, sans-serif" fill="#555">{yTitle.t}</text>
  </svg>
)

const profitChart = {
  w: 609, h: 190, grid: [52, 608], tickX: 42,
  ticks: [{ label: '5M', y: 38 }, { label: '0M', y: 150 }],
  bars: [{ x: 115, w: 105, top: 22 }, { x: 272.5, w: 105, top: 88 }, { x: 430.5, w: 105, top: 98 }],
  labels: [{ t: 'NSW', x: 171, y: 166 }, { t: 'VIC', x: 329, y: 166 }, { t: 'QLD', x: 486, y: 166 }],
  value: { t: '5.7M', x: 167, y: 42 },
  xTitle: { t: 'state', x: 329, y: 184, s: 10, b: 1 },
  yTitle: { t: 'Total Profit', x: 13, y: 82, s: 10 },
}
const customerChart = {
  w: 609, h: 190, grid: [48, 608], tickX: 38,
  ticks: [{ label: '2K', y: 61 }, { label: '0K', y: 150 }],
  bars: [{ x: 111.5, w: 106, top: 54 }, { x: 270.5, w: 106, top: 105 }, { x: 429.5, w: 106, top: 113 }],
  labels: [{ t: 'NSW', x: 168, y: 166 }, { t: 'VIC', x: 327, y: 166 }, { t: 'QLD', x: 486, y: 166 }],
  xTitle: { t: 'state', x: 327, y: 184, s: 10, b: 1 },
  yTitle: { t: 'No. of Customers', x: 13, y: 83, s: 10 },
}
const industries = [
  ['Manufacturing', 29], ['Financial Services', 34], ['Health', 83], ['Retail', 184], ['Property', 204],
  ['Entertainment', 248], ['IT', 250], ['Argiculture', 257], ['Telecommunications', 271],
]
const industryChart = {
  w: 693, h: 410, grid: [69, 692], tickX: 59,
  ticks: [{ label: '30M', y: 55 }, { label: '20M', y: 135 }, { label: '10M', y: 215 }, { label: '0M', y: 295 }],
  bars: industries.map(([, top], i) => ({ x: 95.6 + i * 65.4, w: 45.6, top })),
  labels: industries.map(([t], i) => ({ t, x: 115 + i * 65.4, y: 309 })),
  rotate: -33,
  value: { t: '33M', x: 118, y: 49 },
  xTitle: { t: 'job_industry_category', x: 380, y: 402, s: 14 },
  yTitle: { t: 'Sum of transaction_id', x: 18, y: 155, s: 12.5 },
}

const GroupData = ({ w, label, pad, children }) => (
  <Group $w={w}>
    <GroupItems $pad={pad}>{children}</GroupItems>
    <GroupLabel>{label}</GroupLabel>
  </Group>
)
const RibbonButton = ({ w, icon, lines, chevron, off }) => (
  <Item $w={w} $off={off}>
    <ItemIcon>{icon}</ItemIcon>
    {lines.map((l, i) => (
      <LabelLine key={l}>
        {l}
        {chevron && i === lines.length - 1 && <Chevron />}
      </LabelLine>
    ))}
  </Item>
)
const TableIcon = () => (
  <svg width="16" height="16" viewBox="0 0 16 16" fill="none">
    <path d="M.5 1.500h15v13H.5zM.5 5.500h15M.5 10h15M5.500 1.500v13M10.500 1.500v13" stroke="#555" />
    <path d="M.5 1.500h15v3H.5z" fill="#777" />
  </svg>
)
const DoubleChevron = () => (
  <svg width="16" height="16" viewBox="0 0 16 16" fill="none">
    <path d="M1 1l7 7-7 7M7 1l7 7-7 7" stroke="#323130" strokeWidth="1.2" />
  </svg>
)
const SearchGlass = ({ c = '#444', size = 18 }) => (
  <svg width={size} height={size} viewBox="0 0 18 18" fill="none">
    <circle cx="11" cy="7" r="5.8" stroke={c} strokeWidth="1.2" />
    <path d="M6.800 11.200L1 17" stroke={c} strokeWidth="1.4" />
  </svg>
)

export default function App() {
  return (
    <Shell>
      <Global />
      <TitleBar>
        <TitleIcons>
          <svg width="20" height="20" viewBox="0 0 20 20" fill="none">
            <path d="M2 1h13l3 3v15H2zM6 1v6h8V1M6 19v-7h8v7" stroke="#fff" strokeWidth="1.2" />
          </svg>
          <svg width="20" height="20" viewBox="0 0 20 20" fill="none">
            <path d="M1 2v7h7M1 9c5-6 14-4 14 3 0 3-2 5-4 7" stroke="#fff" strokeWidth="1.2" />
          </svg>
          <svg width="20" height="20" viewBox="0 0 20 20" fill="none">
            <path d="M19 2v7h-7M19 9c-5-6-14-4-14 3 0 3 2 5 4 7" stroke="#777" strokeWidth="1.2" />
          </svg>
        </TitleIcons>
        <DocTitle>company_data_analysis (PowerBI) - Power BI Desktop</DocTitle>
        <TopSearch>
          <SearchGlass c="#3b3a39" size={20} />
          Search
        </TopSearch>
        <SignIn>Sign in</SignIn>
        <svg width="24" height="24" viewBox="0 0 24 24" fill="none">
          <circle cx="12" cy="12" r="11" stroke="#fff" strokeWidth="1.6" />
          <circle cx="12" cy="9.500" r="4" fill="#fff" />
          <path d="M4.500 19c2-5 13-5 15 0-3 3.500-12 3.500-15 0z" fill="#fff" />
        </svg>
        <WindowButtons>
          <WindowButton>
            <svg width="12" height="12" viewBox="0 0 12 12"><path d="M0 6h12" stroke="#fff" /></svg>
          </WindowButton>
          <WindowButton>
            <svg width="12" height="12" viewBox="0 0 12 12" fill="none"><path d="M.5 3h8.500v8.500H.5zM3 3V.5h8.500V9H9" stroke="#fff" /></svg>
          </WindowButton>
          <WindowButton>
            <svg width="12" height="12" viewBox="0 0 12 12"><path d="M.5.5l11 11M11.500.5l-11 11" stroke="#fff" /></svg>
          </WindowButton>
        </WindowButtons>
      </TitleBar>

      <Ribbon>
        <Menu>
          <MenuItem>File</MenuItem>
          <MenuItem $active>Home</MenuItem>
          <MenuItem>Insert</MenuItem>
          <MenuItem>Modeling</MenuItem>
          <MenuItem>View</MenuItem>
          <MenuItem>Optimize</MenuItem>
          <MenuItem>Help</MenuItem>
        </Menu>
        <Groups>
          <GroupData w={201} label="Clipboard" pad={13}>
            <RibbonButton w={45} icon={RI.paste} lines={['Paste']} off />
            <SmallColumn>
              <SmallItem>
                <svg width="18" height="18" viewBox="0 0 18 18" fill="none"><path d="M5 1l7 12M13 1L6 13" stroke="#aaa" strokeWidth="1.2" /><circle cx="5" cy="15" r="2.400" stroke="#8fb8de" /><circle cx="13" cy="15" r="2.400" stroke="#8fb8de" /></svg>
                Cut
              </SmallItem>
              <SmallItem>
                <svg width="18" height="20" viewBox="0 0 18 20" fill="none"><path d="M1 1h7v4M1 1v13h4" stroke="#bbb" /><path d="M5 5h7l4 4v10H5z" stroke="#aaa" fill="#f8f8f8" /><path d="M8 12h5M8 15h5" stroke="#bbb" /></svg>
                Copy
              </SmallItem>
              <SmallItem>
                <svg width="18" height="18" viewBox="0 0 18 18" fill="none"><path d="M1 10l7-7 6 6-7 7z" fill="#f7e3cc" stroke="#e5b98a" /><path d="M11 5l4-4 2 2-4 4" stroke="#aaa" strokeWidth="1.4" /></svg>
                Format painter
              </SmallItem>
            </SmallColumn>
          </GroupData>
          <GroupData w={475} label="Data" pad={6}>
            <RibbonButton w={52} icon={RI.data} lines={['Get', 'data']} chevron />
            <RibbonButton w={72} icon={RI.excel} lines={['Excel', 'workbook']} />
            <RibbonButton w={94} icon={RI.lake} lines={['OneLake data', 'hub']} chevron />
            <RibbonButton w={52} icon={RI.sql} lines={['SQL', 'Server']} />
            <RibbonButton w={48} icon={RI.enter} lines={['Enter', 'data']} />
            <RibbonButton w={71} icon={RI.dataverse} lines={['Dataverse']} />
            <RibbonButton w={64} icon={RI.recent} lines={['Recent', 'sources']} chevron />
          </GroupData>
          <GroupData w={145} label="Queries" pad={6}>
            <RibbonButton w={80} icon={RI.transform} lines={['Transform', 'data']} chevron />
            <RibbonButton w={44} icon={RI.refresh} lines={['Refresh']} />
          </GroupData>
          <GroupData w={184} label="Insert" pad={10}>
            <RibbonButton w={50} icon={RI.newVisual} lines={['New', 'visual']} />
            <RibbonButton w={50} icon={RI.textBox} lines={['Text', 'box']} />
            <RibbonButton w={62} icon={RI.moreVisuals} lines={['More', 'visuals']} chevron />
          </GroupData>
          <GroupData w={144} label="Calculations" pad={9}>
            <RibbonButton w={64} icon={RI.measure} lines={['New', 'measure']} />
            <RibbonButton w={58} icon={RI.quick} lines={['Quick', 'measure']} />
          </GroupData>
          <GroupData w={90} label="Sensitivity" pad={6}>
            <Item $w={76} $off>
              <ItemIcon>{RI.sensitivity}</ItemIcon>
              <LabelLine>Sensitivity</LabelLine>
              <LabelLine><Chevron c="#a8a6a4" /></LabelLine>
            </Item>
          </GroupData>
          <GroupData w={74} label="Share" pad={7}>
            <RibbonButton w={60} icon={RI.publish} lines={['Publish']} />
          </GroupData>
        </Groups>
        <Collapse>
          <svg width="12" height="8" viewBox="0 0 12 8" fill="none"><path d="M1 7l5-5 5 5" stroke="#323130" strokeWidth="1.4" /></svg>
        </Collapse>
      </Ribbon>

      <Body>
        <Rail>
          <svg width="20" height="20" viewBox="0 0 20 20" fill="none"><path d="M1 1v18h18" stroke="#333" /><path d="M4 17V9h3v8M8.500 17V4h3v13M13 17V7h3v10" stroke={GREEN} strokeWidth="1.2" /></svg>
          <svg width="22" height="20" viewBox="0 0 22 20" fill="none"><path d="M1 1h20v18H1zM1 6.500h20M1 12.500h20M7.500 1v18M14.500 1v18" stroke="#8a8886" /></svg>
          <svg width="22" height="24" viewBox="0 0 22 24" fill="none"><path d="M1 4h8v6H1zM1 14h8v8H1zM12 1h9v10h-9zM12 13h9v10h-9z" stroke="#8a8886" /><path d="M9 7h3M9 18h3" stroke="#8a8886" /></svg>
        </Rail>
        <Center>
          <Canvas>
            <Report>
              <TopRow>
                <LogoCard>
                  <Logo>
                    <LogoTop>
                      <LogoSpr>SPR</LogoSpr>
                      <Gear />
                      <LogoCket>CKET</LogoCket>
                    </LogoTop>
                    <LogoBottom>CENTRAL</LogoBottom>
                  </Logo>
                </LogoCard>
                <KpiCard>
                  <VisualTitle $h={23}>Total Numbers of Customers</VisualTitle>
                  <DotRule />
                  <KpiValue>4851</KpiValue>
                </KpiCard>
                <KpiCard>
                  <VisualTitle $h={23}>Total New Customers</VisualTitle>
                  <DotRule />
                  <KpiValue>852</KpiValue>
                </KpiCard>
              </TopRow>
              <Ticker>
                <TickerBand>
                  <TickerItem>ycles 39310.770000000004</TickerItem>
                  <TickerItem>Norco Bicycles 20941.079999999998</TickerItem>
                  <TickerItem>OHM Cycles 70022.14000000001</TickerItem>
                  <TickerItem>Solex Cycles</TickerItem>
                </TickerBand>
              </Ticker>
              <NavRow>
                <PageButton>Page 1</PageButton>
                <PageButton>Page 2</PageButton>
                <PageButton>Page 3</PageButton>
                <SlicerCard>
                  {['Select all', 'Mountain', 'Road', 'Standard', 'Touring'].map((s) => (
                    <SlicerButton key={s}>{s}</SlicerButton>
                  ))}
                </SlicerCard>
              </NavRow>
              <BottomGrid>
                <ChartCard>
                  <VisualTitle $h={24}>Total Profit by state</VisualTitle>
                  <DotRule />
                  <BarChart {...profitChart} />
                </ChartCard>
                <ChartCard $tall>
                  <VisualTitle $h={24}>Sum of transaction_id by job_industry_category</VisualTitle>
                  <DotRule />
                  <BarChart {...industryChart} />
                </ChartCard>
                <ChartCard>
                  <VisualTitle $h={24}>No. of Customers by state</VisualTitle>
                  <DotRule />
                  <BarChart {...customerChart} />
                </ChartCard>
              </BottomGrid>
            </Report>
          </Canvas>
          <TabStrip>
            <TabArrows>
              <svg width="6" height="10" viewBox="0 0 6 10"><path d="M6 0v10L0 5z" fill="#c8c6c4" /></svg>
              <svg width="6" height="10" viewBox="0 0 6 10"><path d="M0 0v10l6-5z" fill="#c8c6c4" /></svg>
            </TabArrows>
            <Tab $w={125} $active>Dashboard</Tab>
            <Tab $w={129}>story telling</Tab>
            <AddTab>
              <svg width="14" height="14" viewBox="0 0 14 14"><path d="M7 0v14M0 7h14" stroke="#fff" strokeWidth="3" /></svg>
            </AddTab>
          </TabStrip>
        </Center>

        <Pane $w={226}>
          <PaneHead $pad={10}>Visualizations<DoubleChevron /></PaneHead>
          <BuildLabel>Build visual</BuildLabel>
          <BuildTabs>
            <BuildTab $active $gap={41}>
              <svg width="30" height="30" viewBox="0 0 30 30" fill="none">
                <path d="M5 2h20" stroke="#444" />
                <rect x="2" y="7" width="26" height="8" fill={GREEN} stroke="#333" strokeDasharray="2 1" />
                <rect x="2" y="20" width="26" height="8" fill={GREEN} stroke="#333" strokeDasharray="2 1" />
              </svg>
            </BuildTab>
            <BuildTab>
              <svg width="32" height="32" viewBox="0 0 32 32" fill="none">
                <path d="M12 30H4V2h13l7 8v6M17 2v8h7" stroke="#333" strokeWidth="1.3" />
                <path d="M31 13L19 25M14 30c2-1 2-6 5-6 3 0 4 2 3 3-2 3-6 4-8 3z" stroke="#333" strokeWidth="1.3" />
              </svg>
            </BuildTab>
          </BuildTabs>
          <VizGrid $top={11}>
            {builtIn.map((icon, i) => (
              <S key={i}>{icon}</S>
            ))}
          </VizGrid>
          <Divider />
          <VizGrid $top={0}>
            {custom.map((icon, i) => (
              <S key={i} w={26} h={24}><Blur>{icon}</Blur></S>
            ))}
          </VizGrid>
          <PaneRule />
          <FieldLabel $top={11}>Values</FieldLabel>
          <DropBox $top={8} $h={34} $pad={13}>Add data fields here</DropBox>
          <FieldLabel $top={15} $bold>Drill through</FieldLabel>
          <ToggleRow $top={13}>Cross-report<Toggle>Off</Toggle></ToggleRow>
          <ToggleRow $top={14}>Keep all filters<Toggle $on>On</Toggle></ToggleRow>
          <DropBox $top={13} $h={32} $pad={10}>Add drill-through fields here</DropBox>
        </Pane>

        <Pane $w={226}>
          <PaneHead $pad={10}>Data<DoubleChevron /></PaneHead>
          <DataSearch>
            <SearchGlass c="#444" size={17} />
            Search
          </DataSearch>
          <TableList>
            {['CustomerAddress', 'CustomerDemographic', 'NewCustomerList', 'Transactions'].map((t) => (
              <TableRow key={t}>
                <svg width="8" height="14" viewBox="0 0 8 14" fill="none"><path d="M1 1l6 6-6 6" stroke="#605e5c" /></svg>
                <TableIcon />
                <span>{t}</span>
              </TableRow>
            ))}
          </TableList>
        </Pane>
      </Body>

      <StatusBar>
        Page 1 of 2
        <ZoomBox>
          -
          <ZoomTrack>
            <ZoomThumb $x={48} $w={5} $h={13} />
            <ZoomThumb $x={62} $w={2} $h={7} />
          </ZoomTrack>
          <svg width="10" height="10" viewBox="0 0 10 10"><path d="M5 0v10M0 5h10" stroke="#605e5c" strokeWidth="1.4" /></svg>
          <ZoomPercent>82%</ZoomPercent>
          <FitButton>
            <svg width="20" height="16" viewBox="0 0 20 16" fill="none"><rect x=".5" y=".5" width="19" height="15" stroke="#8a8886" /><path d="M3 6V3h3M14 3h3v3M3 10v3h3M17 10v3h-3" stroke="#605e5c" /></svg>
          </FitButton>
        </ZoomBox>
      </StatusBar>
    </Shell>
  )
}
